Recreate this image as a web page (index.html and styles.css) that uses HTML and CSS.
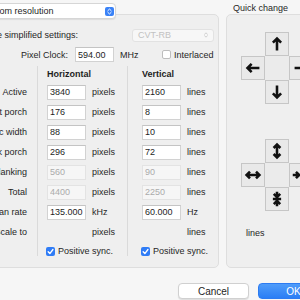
FILE: index.html
```html
<!DOCTYPE html>
<html lang="en">
<head>
    <meta charset="UTF-8">
    <meta name="viewport" content="width=device-width, initial-scale=1.0">
    <title>Custom resolution</title>
    <link rel="stylesheet" href="styles.css">
</head>
<body>
<div class="window">
    <div class="main">
        <div class="left">
            <div class="popup">
                <span>Custom resolution</span>
                <span class="stepper">
                    <svg viewBox="0 0 10 10" width="9" height="9"><path d="M3.2 4 L5 2.3 L6.8 4 M3.2 6 L5 7.7 L6.8 6" fill="none" stroke="#fff" stroke-width="1.1" stroke-linecap="round" stroke-linejoin="round"/></svg>
                </span>
            </div>
            <div class="panel">
                <div class="simple-row">
                    <span class="simple-label">Use simplified settings:</span>
                    <span class="select-disabled">CVT-RB
                        <svg viewBox="0 0 10 10" width="8" height="8"><path d="M3.2 4 L5 2.3 L6.8 4 M3.2 6 L5 7.7 L6.8 6" fill="none" stroke="#c4c4c4" stroke-width="1" stroke-linecap="round" stroke-linejoin="round"/></svg>
                    </span>
                </div>
                <div class="clock-row">
                    <span class="clock-label">Pixel Clock:</span>
                    <input class="field" type="text" value="594.00">
                    <span class="unit-mhz">MHz</span>
                    <span class="checkbox"></span>
                    <span>Interlaced</span>
                </div>
                <div class="timings">
                    <div class="col col-labels">
                        <div class="head"></div>
                        <div class="row">Active</div>
                        <div class="row">Front porch</div>
                        <div class="row">Sync width</div>
                        <div class="row">Back porch</div>
                        <div class="row">Blanking</div>
                        <div class="row">Total</div>
                        <div class="row">Scan rate</div>
                        <div class="row">Scale to</div>
                        <div class="row sync"></div>
                    </div>
                    <div class="col col-h">
                        <div class="head">Horizontal</div>
                        <div class="row"><input class="field" type="text" value="3840"><span>pixels</span></div>
                        <div class="row"><input class="field" type="text" value="176"><span>pixels</span></div>
                        <div class="row"><input class="field" type="text" value="88"><span>pixels</span></div>
                        <div class="row"><input class="field" type="text" value="296"><span>pixels</span></div>
                        <div class="row"><input class="field" type="text" value="560" disabled><span>pixels</span></div>
                        <div class="row"><input class="field" type="text" value="4400" disabled><span>pixels</span></div>
                        <div class="row"><input class="field" type="text" value="135.000"><span>kHz</span></div>
                        <div class="row"><span class="spacer"></span><span>pixels</span></div>
                        <div class="row sync">
                            <span class="checkbox checked"><svg viewBox="0 0 10 10" width="9" height="9"><path d="M2.4 5.3 L4.3 7.3 L7.7 2.8" fill="none" stroke="#fff" stroke-width="1.5" stroke-linecap="round" stroke-linejoin="round"/></svg></span>
                            <span>Positive sync.</span>
                        </div>
                    </div>
                    <div class="col col-v">
                        <div class="head">Vertical</div>
                        <div class="row"><input class="field" type="text" value="2160"><span>lines</span></div>
                        <div class="row"><input class="field" type="text" value="8"><span>lines</span></div>
                        <div class="row"><input class="field" type="text" value="10"><span>lines</span></div>
                        <div class="row"><input class="field" type="text" value="72"><span>lines</span></div>
                        <div class="row"><input class="field" type="text" value="90" disabled><span>lines</span></div>
                        <div class="row"><input class="field" type="text" value="2250" disabled><span>lines</span></div>
                        <div class="row"><input class="field" type="text" value="60.000"><span>Hz</span></div>
                        <div class="row"><span class="spacer"></span><span>lines</span></div>
                        <div class="row sync">
                            <span class="checkbox checked"><svg viewBox="0 0 10 10" width="9" height="9"><path d="M2.4 5.3 L4.3 7.3 L7.7 2.8" fill="none" stroke="#fff" stroke-width="1.5" stroke-linecap="round" stroke-linejoin="round"/></svg></span>
                            <span>Positive sync.</span>
                        </div>
                    </div>
                </div>
            </div>
        </div>

        <div class="right">
            <div class="title">Quick change</div>
            <div class="panel panel-right">
                <div class="pad">
                    <span></span>
                    <button class="key"><svg viewBox="0 0 24 24" width="24" height="24"><path d="M12 19V6 M7.5 10.5 L12 6 L16.5 10.5"/></svg></button>
                    <span></span>
                    <button class="key"><svg viewBox="0 0 24 24" width="24" height="24"><path d="M19 12H6 M10.5 7.5 L6 12 L10.5 16.5"/></svg></button>
                    <span class="center"></span>
                    <button class="key"><svg viewBox="0 0 24 24" width="24" height="24"><path d="M5 12H18 M13.5 7.5 L18 12 L13.5 16.5"/></svg></button>
                    <span></span>
                    <button class="key"><svg viewBox="0 0 24 24" width="24" height="24"><path d="M12 5V18 M7.5 13.5 L12 18 L16.5 13.5"/></svg></button>
                    <span></span>
                </div>
                <div class="pad">
                    <span></span>
                    <button class="key"><svg viewBox="0 0 24 24" width="24" height="24"><path d="M12 5V19 M8.3 8.7 L12 5 L15.7 8.7 M8.3 15.3 L12 19 L15.7 15.3"/></svg></button>
                    <span></span>
                    <button class="key"><svg viewBox="0 0 24 24" width="24" height="24"><path d="M5 12H19 M8.7 8.3 L5 12 L8.7 15.7 M15.3 8.3 L19 12 L15.3 15.7"/></svg></button>
                    <span class="center"></span>
                    <button class="key"><svg viewBox="0 0 24 24" width="24" height="24"><path d="M3 12H10 M6.5 8.5 L10 12 L6.5 15.5 M21 12H14 M17.5 8.5 L14 12 L17.5 15.5"/></svg></button>
                    <span></span>
                    <button class="key"><svg viewBox="0 0 24 24" width="24" height="24"><path d="M12 4V10 M8.5 6.5 L12 10 L15.5 6.5 M12 20V14 M8.5 17.5 L12 14 L15.5 17.5 M7.5 12H16.5"/></svg></button>
                    <span></span>
                </div>
                <div class="note">lines</div>
            </div>
        </div>
    </div>

    <div class="buttons">
        <button class="btn cancel">Cancel</button>
        <button class="btn ok">OK</button>
    </div>
</div>
</body>
</html>
```

FILE: styles.css
```css
* {
    box-sizing: border-box;
}
body {
    margin: 0;
    width: 300px;
    height: 300px;
    overflow: hidden;
    background: #f6f6f6;
    font-family: "Liberation Sans", Arial, sans-serif;
    font-size: 9px;
    color: #262626;
}
.window {
    margin-left: -80px;
    width: 420px;
    padding-top: 3px;
}
.main {
    display: flex;
    gap: 7px;
}
.left {
    width: 299px;
}
.popup {
    position: relative;
    z-index: 1;
    margin-left: 50px;
    margin-bottom: -5px;
    width: 146px;
    height: 16px;
    display: flex;
    align-items: center;
    justify-content: space-between;
    padding: 0 1px 0 10px;
    background: #fff;
    border: 1px solid #d6d6d6;
    border-radius: 4px;
    box-shadow: 0 1px 1px rgba(0, 0, 0, 0.08);
    color: #1e1e1e;
}
.stepper {
    width: 9px;
    height: 9px;
    border-radius: 2px;
    background: #3a82f7;
    display: flex;
}
.panel {
    height: 254px;
    background: #efefef;
    border: 1px solid #dedede;
    border-radius: 5px;
    padding-top: 13px;
}
.simple-row {
    display: flex;
    align-items: center;
    height: 14px;
}
.simple-label {
    width: 157px;
    text-align: right;
}
.select-disabled {
    margin-left: 54px;
    width: 82px;
    height: 13px;
    display: flex;
    align-items: center;
    justify-content: space-between;
    padding: 0 3px 0 5px;
    background: #f7f7f7;
    border: 1px solid #e2e2e2;
    border-radius: 3px;
    color: #c2c2c2;
}
.clock-row {
    display: flex;
    align-items: center;
    height: 15px;
    margin-top: 5px;
}
.clock-label {
    width: 147px;
    margin-right: 7px;
    text-align: right;
}
.field {
    width: 39px;
    height: 15px;
    margin: 0;
    padding: 0 0 0 2px;
    border: 1px solid #d2d2d2;
    border-top-color: #c4c4c4;
    background: #fff;
    font: inherit;
    color: #1e1e1e;
    outline: none;
}
.field:disabled {
    background: #f6f6f6;
    border-color: #e3e3e3;
    color: #ababab;
}
.unit-mhz {
    margin-left: 6px;
    width: 42px;
}
.checkbox {
    width: 9px;
    height: 9px;
    margin-right: 3px;
    border: 1px solid #bdbdbd;
    border-radius: 2px;
    background: #fff;
    display: flex;
}
.checkbox.checked {
    border: none;
    background: #2f7cf6;
    margin-left: -1px;
}
.timings {
    display: flex;
    margin-top: 4px;
}
.col {
    display: flex;
    flex-direction: column;
}
.col-labels {
    width: 116px;
    padding-right: 10px;
}
.col-labels .row {
    justify-content: flex-end;
}
.col-h {
    width: 90px;
    padding-left: 9px;
    border-left: 1px solid #dadada;
}
.col-v {
    padding-left: 14px;
    border-left: 1px solid #dadada;
}
.head {
    height: 16px;
    display: flex;
    align-items: center;
    font-weight: bold;
    color: #1e1e1e;
}
.row {
    height: 20px;
    display: flex;
    align-items: center;
    gap: 6px;
}
.row.sync {
    height: 14px;
    align-items: flex-end;
    gap: 0;
}
.spacer {
    width: 39px;
}
.right {
    width: 100px;
}
.title {
    height: 11px;
    line-height: 11px;
    padding-left: 7px;
}
.panel-right {
    padding: 17px 0 0 14px;
}
.pad {
    display: grid;
    grid-template-columns: repeat(3, 24px);
    grid-template-rows: repeat(3, 24px);
}
.pad + .pad {
    margin-top: 35px;
}
.key {
    margin: 0;
    padding: 0;
    display: flex;
    align-items: center;
    justify-content: center;
    background: #e9e9e9;
    border: 1px solid #c6c6c6;
}
.key svg {
    fill: none;
    stroke: #111;
    stroke-width: 2.8;
}
.center {
    background: #ebebeb;
}
.note {
    margin-top: 17px;
    padding-left: 5px;
}
.buttons {
    display: flex;
    gap: 9px;
    margin-top: 15px;
    padding-left: 258px;
}
.btn {
    width: 71px;
    height: 16px;
    padding: 0;
    border-radius: 4px;
    font-family: inherit;
    font-size: 10px;
}
.cancel {
    background: #fff;
    border: 1px solid #d0d0d0;
    box-shadow: 0 1px 1px rgba(0, 0, 0, 0.1);
    color: #1e1e1e;
}
.ok {
    background: linear-gradient(#4f9cfa, #2a7ef5);
    border: 1px solid #2c7bf2;
    color: #fff;
}
```
